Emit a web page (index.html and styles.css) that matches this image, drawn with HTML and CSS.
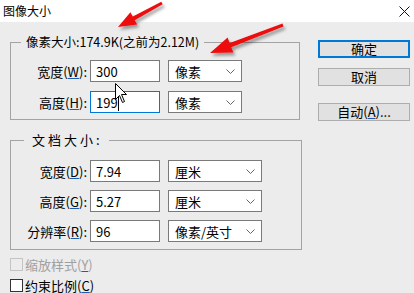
FILE: index.html
```html
<!DOCTYPE html>
<html lang="zh-CN">
<head>
    <meta charset="UTF-8">
    <meta name="viewport" content="width=device-width, initial-scale=1.0">
    <title>图像大小</title>
    <link rel="stylesheet" href="styles.css">
</head>
<body>
    <div class="titlebar">
        <span class="title">图像大小</span>
        <svg class="close" width="11" height="11" viewBox="0 0 11 11">
            <path d="M0.5 0.5 L10.5 10.5 M10.5 0.5 L0.5 10.5" stroke="#111" stroke-width="1" fill="none"/>
        </svg>
    </div>
    <div class="dialog">
        <div class="left">
            <fieldset class="group pixel">
                <legend>像素大小:174.9K(之前为2.12M)</legend>
                <div class="row">
                    <label for="pw">宽度(<u>W</u>):</label>
                    <input type="text" id="pw" value="300">
                    <div class="select">像素<svg class="chev" width="9" height="5" viewBox="0 0 9 5"><path d="M0.5 0.5 L4.5 4.5 L8.5 0.5" stroke="#666" fill="none"/></svg></div>
                </div>
                <div class="row">
                    <label for="ph">高度(<u>H</u>):</label>
                    <div class="field focus">199<span class="caret"></span></div>
                    <div class="select">像素<svg class="chev" width="9" height="5" viewBox="0 0 9 5"><path d="M0.5 0.5 L4.5 4.5 L8.5 0.5" stroke="#666" fill="none"/></svg></div>
                </div>
            </fieldset>
            <fieldset class="group doc">
                <legend>文档大小:</legend>
                <div class="row">
                    <label for="dw">宽度(<u>D</u>):</label>
                    <input type="text" id="dw" value="7.94">
                    <div class="select wide">厘米<svg class="chev" width="9" height="5" viewBox="0 0 9 5"><path d="M0.5 0.5 L4.5 4.5 L8.5 0.5" stroke="#666" fill="none"/></svg></div>
                </div>
                <div class="row">
                    <label for="dh">高度(<u>G</u>):</label>
                    <input type="text" id="dh" value="5.27">
                    <div class="select wide">厘米<svg class="chev" width="9" height="5" viewBox="0 0 9 5"><path d="M0.5 0.5 L4.5 4.5 L8.5 0.5" stroke="#666" fill="none"/></svg></div>
                </div>
                <div class="row">
                    <label for="dr">分辨率(<u>R</u>):</label>
                    <input type="text" id="dr" value="96">
                    <div class="select wide">像素/英寸<svg class="chev" width="9" height="5" viewBox="0 0 9 5"><path d="M0.5 0.5 L4.5 4.5 L8.5 0.5" stroke="#666" fill="none"/></svg></div>
                </div>
            </fieldset>
            <div class="checks">
                <div class="check disabled"><span class="box"></span>缩放样式(<u>Y</u>)</div>
                <div class="check"><span class="box"></span>约束比例(<u>C</u>)</div>
            </div>
        </div>
        <div class="buttons">
            <button class="btn default">确定</button>
            <button class="btn">取消</button>
            <button class="btn auto">自动(<u>A</u>)...</button>
        </div>
    </div>

    <svg class="overlay" width="414" height="293" viewBox="0 0 414 293">
        <defs>
            <filter id="shadow" x="-20%" y="-40%" width="160%" height="200%">
                <feDropShadow dx="2" dy="3" stdDeviation="1.6" flood-color="#000" flood-opacity="0.35"/>
            </filter>
        </defs>
        <polygon filter="url(#shadow)" fill="#ee1111"
            points="118,27 137.2,24.5 134.8,20.2 162.7,4.3 161.3,1.7 132.8,16.6 130.4,12.3"/>
        <polygon filter="url(#shadow)" fill="#ee1111"
            points="210,53 233.4,52.6 231.3,47.2 283.5,26.4 282.5,23.6 229.7,43 227.6,37.6"/>
        <path d="M115.5 83.5 L115.5 99.5 L119.5 95.5 L122.5 102.5 L124.5 101.5 L121.5 94.5 L126.5 94.5 Z"
            fill="#fff" stroke="#000" stroke-width="1"/>
    </svg>
</body>
</html>
```

FILE: styles.css
```css
* {
    box-sizing: border-box;
}
body {
    margin: 0;
    width: 414px;
    height: 293px;
    overflow: hidden;
    position: relative;
    background: #ececec;
    font-family: "Noto Sans CJK SC", "Noto Sans", sans-serif;
    font-size: 12px;
    color: #000;
}
u {
    text-decoration-color: #1c5bb5;
}
.titlebar {
    height: 22px;
    background: #fff;
    display: flex;
    align-items: center;
    justify-content: space-between;
    padding: 0 4px 0 3px;
}
.titlebar .title {
    font-size: 12px;
    line-height: 16px;
}
.dialog {
    display: flex;
    align-items: flex-start;
    padding: 12px 0 0 10px;
}
.left {
    width: 292px;
}
.group {
    margin: 0;
    border: 1px solid #a3a3a3;
    padding: 10px 0 6px 0;
    min-width: 0;
}
.group legend {
    margin-left: 10px;
    padding: 0 5px;
    line-height: 16px;
    font-size: 12.5px;
}
.pixel {
    width: 290px;
}
.doc {
    width: 292px;
    margin-top: 12px;
    padding-top: 12px;
    padding-bottom: 7px;
}
.doc legend {
    margin-left: 13px;
    padding: 0 6px 0 8px;
    letter-spacing: 3px;
    font-size: 13px;
}
.row {
    display: flex;
    align-items: center;
    height: 22px;
}
.pixel .row + .row {
    margin-top: 9px;
}
.doc .row + .row {
    margin-top: 8px;
}
.row label {
    width: 76px;
    text-align: right;
    margin-right: 3px;
    font-size: 13px;
}
.row input,
.field {
    width: 70px;
    height: 22px;
    border: 1px solid #7a7a7a;
    background: #fff;
    padding: 0 5px;
    font: inherit;
    font-size: 13px;
    color: #000;
    outline: none;
    margin: 0;
}
.field {
    display: flex;
    align-items: center;
}
.field.focus {
    border-color: #0078d7;
}
.caret {
    display: inline-block;
    width: 1px;
    height: 17px;
    background: #000;
}
.select {
    width: 74px;
    height: 22px;
    margin-left: 8px;
    border: 1px solid #7a7a7a;
    background: #fff;
    display: flex;
    align-items: center;
    justify-content: space-between;
    padding: 0 6px 0 6px;
    font-size: 13px;
}
.select.wide {
    width: 94px;
}
.checks {
    margin-top: 4px;
}
.check {
    display: flex;
    align-items: center;
    height: 21px;
    font-size: 13px;
}
.check .box {
    width: 13px;
    height: 13px;
    border: 1px solid #333;
    background: #fff;
    margin-right: 2px;
}
.check.disabled {
    color: #a0a0a0;
}
.check.disabled .box {
    border-color: #c4c4c4;
    background: transparent;
}
.buttons {
    display: flex;
    flex-direction: column;
    margin: 6px 0 0 16px;
}
.btn {
    width: 92px;
    height: 18px;
    padding: 0;
    border: 1px solid #adadad;
    background: #e1e1e1;
    font: inherit;
    font-size: 13px;
    line-height: 14px;
    color: #000;
    margin-bottom: 10px;
}
.btn.default {
    border: 2px solid #0078d7;
}
.btn.auto {
    margin-top: 7px;
}
.overlay {
    position: absolute;
    left: 0;
    top: 0;
    pointer-events: none;
}
```
